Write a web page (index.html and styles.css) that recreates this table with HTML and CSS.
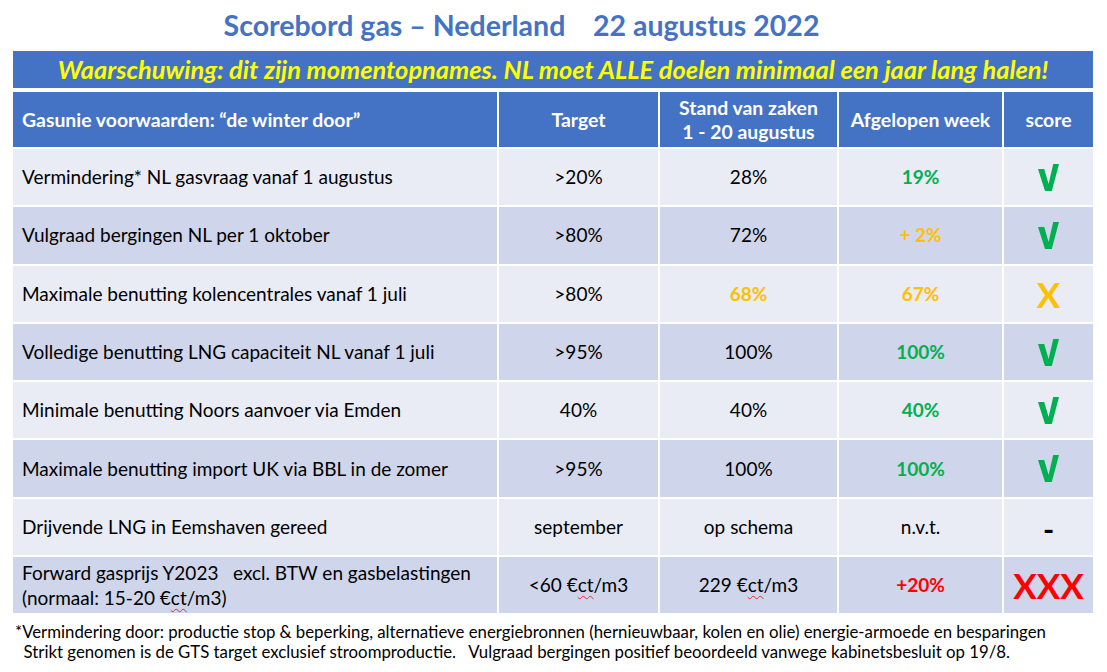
FILE: index.html
```html
<!DOCTYPE html>
<html lang="nl">
<head>
<meta charset="utf-8">
<title>Scorebord gas – Nederland</title>
<link rel="stylesheet" href="styles.css">
</head>
<body>
<div class="page">
  <h1 class="title">Scorebord gas – Nederland    22 augustus 2022</h1>
  <div class="board">
    <div class="banner">Waarschuwing: dit zijn momentopnames. NL moet ALLE doelen minimaal een jaar lang halen!</div>
    <div class="grid">
      <div class="hd left">Gasunie voorwaarden: “de winter door”</div>
      <div class="hd">Target</div>
      <div class="hd">Stand van zaken<br>1 - 20 augustus</div>
      <div class="hd">Afgelopen week</div>
      <div class="hd">score</div>

      <div class="c odd left">Vermindering* NL gasvraag vanaf 1 augustus</div>
      <div class="c odd">&gt;20%</div>
      <div class="c odd">28%</div>
      <div class="c odd green b">19%</div>
      <div class="c odd"><svg class="chk" viewBox="0 0 21 27"><polygon points="0,5 6.2,5 10.6,20 15.2,0 21,0 13.8,27 7,27"/></svg></div>

      <div class="c even left">Vulgraad bergingen NL per 1 oktober</div>
      <div class="c even">&gt;80%</div>
      <div class="c even">72%</div>
      <div class="c even orange b">+ 2%</div>
      <div class="c even"><svg class="chk" viewBox="0 0 21 27"><polygon points="0,5 6.2,5 10.6,20 15.2,0 21,0 13.8,27 7,27"/></svg></div>

      <div class="c odd left">Maximale benutting kolencentrales vanaf 1 juli</div>
      <div class="c odd">&gt;80%</div>
      <div class="c odd orange b">68%</div>
      <div class="c odd orange b">67%</div>
      <div class="c odd"><span class="mark orange">X</span></div>

      <div class="c even left">Volledige benutting LNG capaciteit NL vanaf 1 juli</div>
      <div class="c even">&gt;95%</div>
      <div class="c even">100%</div>
      <div class="c even green b">100%</div>
      <div class="c even"><svg class="chk" viewBox="0 0 21 27"><polygon points="0,5 6.2,5 10.6,20 15.2,0 21,0 13.8,27 7,27"/></svg></div>

      <div class="c odd left">Minimale benutting Noors aanvoer via Emden</div>
      <div class="c odd">40%</div>
      <div class="c odd">40%</div>
      <div class="c odd green b">40%</div>
      <div class="c odd"><svg class="chk" viewBox="0 0 21 27"><polygon points="0,5 6.2,5 10.6,20 15.2,0 21,0 13.8,27 7,27"/></svg></div>

      <div class="c even left">Maximale benutting import UK via BBL in de zomer</div>
      <div class="c even">&gt;95%</div>
      <div class="c even">100%</div>
      <div class="c even green b">100%</div>
      <div class="c even"><svg class="chk" viewBox="0 0 21 27"><polygon points="0,5 6.2,5 10.6,20 15.2,0 21,0 13.8,27 7,27"/></svg></div>

      <div class="c odd left">Drijvende LNG in Eemshaven gereed</div>
      <div class="c odd">september</div>
      <div class="c odd">op schema</div>
      <div class="c odd">n.v.t.</div>
      <div class="c odd"><span class="dash">-</span></div>

      <div class="c even left">
        <div class="lines">
          <div class="pre">Forward gasprijs Y2023   excl. BTW en gasbelastingen</div>
          <div class="pre">(normaal: 15-20 €<span class="sp">ct</span>/m3)</div>
        </div>
      </div>
      <div class="c even"><span>&lt;60 €<span class="sp">ct</span>/m3</span></div>
      <div class="c even"><span>229 €<span class="sp">ct</span>/m3</span></div>
      <div class="c even red b">+20%</div>
      <div class="c even"><span class="mark red">XXX</span></div>
    </div>
  </div>
  <div class="notes">
    <p class="note">*Vermindering door: productie stop &amp; beperking, alternatieve energiebronnen (hernieuwbaar, kolen en olie) energie-armoede en besparingen</p>
    <p class="note">  Strikt genomen is de GTS target exclusief stroomproductie.   Vulgraad bergingen positief beoordeeld vanwege kabinetsbesluit op 19/8.</p>
  </div>
</div>
</body>
</html>
```
FILE: styles.css
```css
html, body {
  margin: 0;
  padding: 0;
  background: #ffffff;
}

body {
  font-family: Lato, "Noto Sans", sans-serif;
  color: #000000;
}

.page {
  width: 1107px;
  height: 672px;
  overflow: hidden;
}

.title {
  margin: 0 64px 0 0;
  height: 51px;
  box-sizing: border-box;
  padding-top: 8px;
  text-align: center;
  font-size: 28.5px;
  line-height: 34px;
  font-weight: 700;
  color: #4472c4;
  white-space: pre;
}

.board {
  margin-left: 13px;
  width: 1080px;
  display: flex;
  flex-direction: column;
  gap: 4px;
}

.banner {
  height: 37px;
  background: #4472c4;
  color: #ffff00;
  font-size: 25.4px;
  font-weight: 700;
  font-style: italic;
  display: flex;
  align-items: center;
  justify-content: center;
  padding-bottom: 2px;
  box-sizing: border-box;
}

.grid {
  display: grid;
  grid-template-columns: 484px 159px 177px 163px 89px;
  grid-template-rows: 55px;
  grid-auto-rows: 56.3px;
  gap: 2px;
}

.hd {
  background: #4472c4;
  color: #ffffff;
  font-weight: 700;
  font-size: 19.4px;
  line-height: 24px;
  display: flex;
  align-items: center;
  justify-content: center;
  text-align: center;
}

.c {
  font-size: 19px;
  line-height: 24px;
  display: flex;
  align-items: center;
  justify-content: center;
  text-align: center;
}

.left {
  justify-content: flex-start;
  text-align: left;
  padding-left: 9px;
}

.lines {
  display: flex;
  flex-direction: column;
}

.pre {
  white-space: pre;
  line-height: 25px;
}

.odd {
  background: #e9ebf5;
}

.even {
  background: #cfd5ea;
}

.b {
  font-weight: 700;
}

.green {
  color: #00b050;
}

.orange {
  color: #ffc000;
}

.red {
  color: #ff0000;
}

.chk {
  width: 21px;
  height: 27px;
  fill: #00b050;
}

.mark {
  font-size: 35px;
  font-weight: 700;
  line-height: 38px;
}

.dash {
  font-size: 30px;
  font-weight: 700;
  line-height: 30px;
  padding-top: 4px;
}

.sp {
  text-decoration: underline wavy #e03030;
  text-decoration-thickness: 1px;
  text-underline-offset: 3px;
}

.notes {
  margin-top: 9px;
  padding-left: 15px;
}

.note {
  margin: 0;
  font-size: 16.8px;
  line-height: 20px;
  white-space: pre;
}
```
